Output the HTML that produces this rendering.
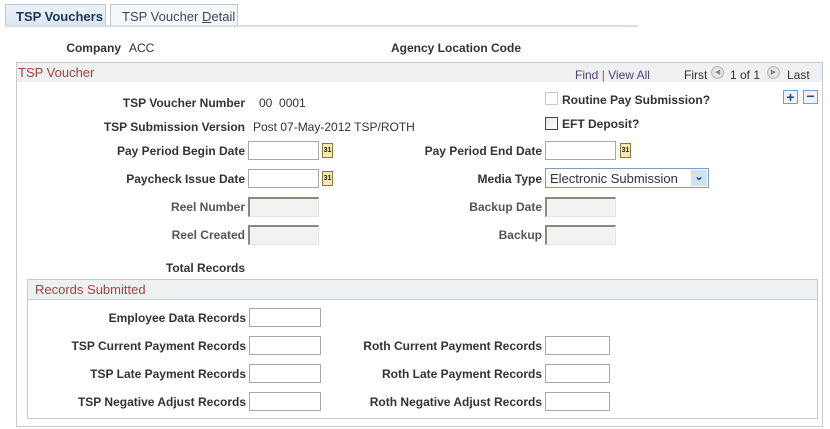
<!DOCTYPE html>
<html><head><meta charset="utf-8"><style>
*{margin:0;padding:0;box-sizing:border-box}
body{width:830px;height:429px;background:#fff;font-family:"Liberation Sans",Arial,sans-serif;font-size:12px;color:#333;position:relative;overflow:hidden}
.a{position:absolute;white-space:nowrap}
.l{position:absolute;font-weight:bold;color:#333;text-align:right;white-space:nowrap}
.g{color:#555}
.in{position:absolute;height:19px;border:1px solid #a8a8a8;background:#fff}
.dis{position:absolute;height:20px;background:#f2f2f2;border-top:2px solid #8a8a7c;border-left:2px solid #8a8a7c;border-right:1px solid #e4e4e4;border-bottom:1px solid #e4e4e4}
.cal{position:absolute;width:11px;height:15px;background:#f5e9b0;border:1px solid #8b7a3a;font-size:7px;font-weight:bold;line-height:13px;text-align:center;color:#222}
.cb{position:absolute;width:13px;height:13px;border:1px solid #c8c8c8;background:#fff}
.arr{position:absolute;width:13px;height:13px;border-radius:50%;background:radial-gradient(#fff,#c8c8c8);border:1px solid #bbb;font-size:7px;line-height:11px;text-align:center;color:#888}
</style></head><body>
<div class="a" style="left:5px;top:4px;width:101px;height:23px;background:linear-gradient(#eef3fa,#d9e4f2);border:1px solid #b9c8db;border-bottom:none;font-weight:bold;font-size:13px;color:#1d3557;padding:4px 0 0 10px">TSP Vouchers</div>
<div class="a" style="left:110px;top:4px;width:128px;height:22px;background:#f6f7f8;border:1px solid #c6c6c6;border-bottom:none;font-size:13px;color:#3a4a5c;padding:4px 0 0 11px">TSP Voucher <u>D</u>etail</div>
<div class="a" style="left:5px;top:25px;width:633px;height:2px;background:#d5dfec"></div>

<div class="l" style="left:60px;top:41px;width:61px">Company</div>
<div class="a" style="left:129px;top:41px">ACC</div>
<div class="l" style="left:391px;top:41px">Agency Location Code</div>

<div class="a" style="left:16px;top:62px;width:807px;height:365px;border:1px solid #c7cbd0"></div>
<div class="a" style="left:17px;top:63px;width:805px;height:19px;background:#eef0f1"></div>
<div class="a" style="left:18px;top:65px;font-size:13px;color:#a0433c">TSP Voucher</div>
<div class="a" style="left:575px;top:68px;color:#51417a">Find <span style="color:#c43">|</span> View All</div>
<div class="a" style="left:684px;top:68px;color:#333">First</div>
<div class="arr" style="left:711px;top:66px">&#9664;</div>
<div class="a" style="left:730px;top:68px">1 of 1</div>
<div class="arr" style="left:767px;top:66px">&#9654;</div>
<div class="a" style="left:787px;top:68px">Last</div>

<div class="a" style="left:783px;top:90px;width:15px;height:14px;border:1px solid #7a9cc0;background:#eef3f8;color:#1f4f82;font-weight:bold;font-size:14px;line-height:12px;text-align:center">+</div>
<div class="a" style="left:803px;top:90px;width:15px;height:14px;border:1px solid #7a9cc0;background:#eef3f8;color:#1f4f82;font-weight:bold;font-size:14px;line-height:11px;text-align:center">−</div>

<div class="l" style="right:585px;top:96px">TSP Voucher Number</div>
<div class="a" style="left:259px;top:96px">00&nbsp; 0001</div>
<div class="l" style="right:585px;top:120px">TSP Submission Version</div>
<div class="a" style="left:253px;top:120px">Post 07-May-2012 TSP/ROTH</div>

<div class="cb" style="left:545px;top:92px"></div>
<div class="l" style="left:562px;top:93px">Routine Pay Submission?</div>
<div class="cb" style="left:545px;top:117px;border-color:#2c4a6a;background:linear-gradient(135deg,#e8e8e8,#fff)"></div>
<div class="l" style="left:562px;top:117px">EFT Deposit?</div>

<div class="l" style="right:585px;top:144px">Pay Period Begin Date</div>
<div class="in" style="left:248px;top:141px;width:71px"></div>
<div class="cal" style="left:322px;top:143px">31</div>
<div class="l" style="right:288px;top:144px">Pay Period End Date</div>
<div class="in" style="left:545px;top:141px;width:71px"></div>
<div class="cal" style="left:620px;top:143px">31</div>

<div class="l" style="right:585px;top:172px">Paycheck Issue Date</div>
<div class="in" style="left:248px;top:169px;width:71px"></div>
<div class="cal" style="left:322px;top:171px">31</div>
<div class="l" style="right:288px;top:172px">Media Type</div>
<div class="a" style="left:545px;top:168px;width:164px;height:20px;border:1px solid #7f9db9;background:#fff;padding:2px 0 0 4px;font-size:13px">Electronic Submission</div>
<div class="a" style="left:691px;top:170px;width:16px;height:16px;background:#d3e0f0;color:#2a4a7a;font-size:11px;font-weight:bold;text-align:center;line-height:14px">&#8964;</div>

<div class="l g" style="right:585px;top:200px">Reel Number</div>
<div class="dis" style="left:248px;top:197px;width:71px"></div>
<div class="l g" style="right:288px;top:200px">Backup Date</div>
<div class="dis" style="left:545px;top:197px;width:71px"></div>
<div class="l g" style="right:585px;top:228px">Reel Created</div>
<div class="dis" style="left:248px;top:225px;width:71px"></div>
<div class="l g" style="right:288px;top:228px">Backup</div>
<div class="dis" style="left:545px;top:225px;width:71px"></div>

<div class="l" style="right:585px;top:261px">Total Records</div>

<div class="a" style="left:27px;top:279px;width:791px;height:140px;border:1px solid #c7cbd0"></div>
<div class="a" style="left:28px;top:280px;width:789px;height:20px;background:#eef0f1;border-bottom:1px solid #c7cbd0"></div>
<div class="a" style="left:35px;top:282px;font-size:13px;color:#a0433c">Records Submitted</div>

<div class="l" style="right:584px;top:311px">Employee Data Records</div>
<div class="in" style="left:249px;top:308px;width:72px"></div>
<div class="l" style="right:584px;top:339px">TSP Current Payment Records</div>
<div class="in" style="left:249px;top:336px;width:72px"></div>
<div class="l" style="right:584px;top:367px">TSP Late Payment Records</div>
<div class="in" style="left:249px;top:364px;width:72px"></div>
<div class="l" style="right:584px;top:395px">TSP Negative Adjust Records</div>
<div class="in" style="left:249px;top:392px;width:72px"></div>

<div class="l" style="right:288px;top:339px">Roth Current Payment Records</div>
<div class="in" style="left:545px;top:336px;width:65px"></div>
<div class="l" style="right:288px;top:367px">Roth Late Payment Records</div>
<div class="in" style="left:545px;top:364px;width:65px"></div>
<div class="l" style="right:288px;top:395px">Roth Negative Adjust Records</div>
<div class="in" style="left:545px;top:392px;width:65px"></div>
</body></html>
